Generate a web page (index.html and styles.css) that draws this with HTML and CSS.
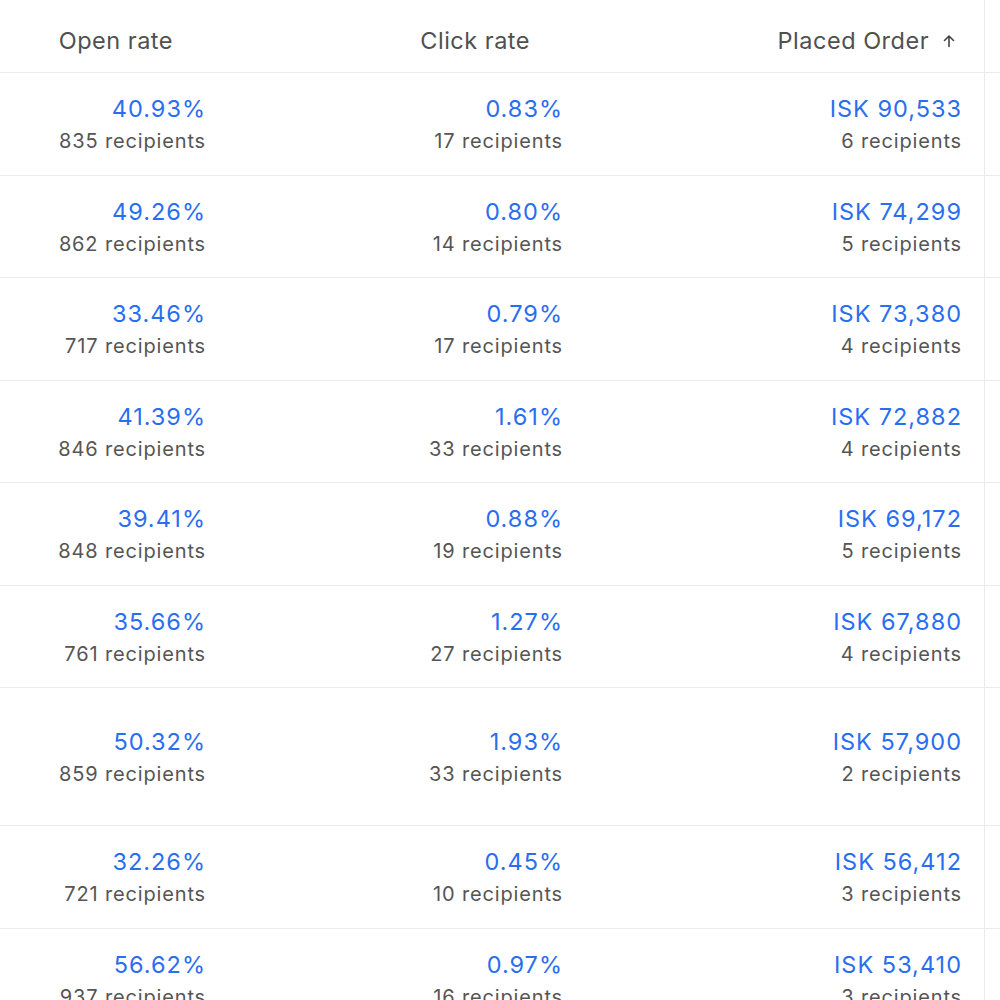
FILE: index.html
```html
<!DOCTYPE html>
<html lang="en">
<head>
<meta charset="utf-8">
<title>Campaign performance</title>
<link rel="stylesheet" href="styles.css">
</head>
<body>
<div class="table">
  <div class="row head">
    <div class="cell"><span class="htext">Open rate</span><span class="sort"></span></div>
    <div class="cell"><span class="htext">Click rate</span><span class="sort"></span></div>
    <div class="cell"><span class="htext">Placed Order</span><span class="sort active">
      <svg viewBox="0 0 16 16" width="16" height="16"><path d="M8 13.5V3M3.5 7.5L8 3l4.5 4.5" fill="none" stroke="currentColor" stroke-width="1.6" stroke-linecap="round" stroke-linejoin="round"/></svg>
    </span></div>
    <div class="cell spacer"></div>
  </div>

  <div class="row">
    <div class="cell"><span class="val">40.93%</span><span class="sub">835 recipients</span></div>
    <div class="cell"><span class="val">0.83%</span><span class="sub">17 recipients</span></div>
    <div class="cell"><span class="val">ISK 90,533</span><span class="sub">6 recipients</span></div>
    <div class="cell spacer"></div>
  </div>
  <div class="row">
    <div class="cell"><span class="val">49.26%</span><span class="sub">862 recipients</span></div>
    <div class="cell"><span class="val">0.80%</span><span class="sub">14 recipients</span></div>
    <div class="cell"><span class="val">ISK 74,299</span><span class="sub">5 recipients</span></div>
    <div class="cell spacer"></div>
  </div>
  <div class="row">
    <div class="cell"><span class="val">33.46%</span><span class="sub">717 recipients</span></div>
    <div class="cell"><span class="val">0.79%</span><span class="sub">17 recipients</span></div>
    <div class="cell"><span class="val">ISK 73,380</span><span class="sub">4 recipients</span></div>
    <div class="cell spacer"></div>
  </div>
  <div class="row">
    <div class="cell"><span class="val">41.39%</span><span class="sub">846 recipients</span></div>
    <div class="cell"><span class="val">1.61%</span><span class="sub">33 recipients</span></div>
    <div class="cell"><span class="val">ISK 72,882</span><span class="sub">4 recipients</span></div>
    <div class="cell spacer"></div>
  </div>
  <div class="row">
    <div class="cell"><span class="val">39.41%</span><span class="sub">848 recipients</span></div>
    <div class="cell"><span class="val">0.88%</span><span class="sub">19 recipients</span></div>
    <div class="cell"><span class="val">ISK 69,172</span><span class="sub">5 recipients</span></div>
    <div class="cell spacer"></div>
  </div>
  <div class="row">
    <div class="cell"><span class="val">35.66%</span><span class="sub">761 recipients</span></div>
    <div class="cell"><span class="val">1.27%</span><span class="sub">27 recipients</span></div>
    <div class="cell"><span class="val">ISK 67,880</span><span class="sub">4 recipients</span></div>
    <div class="cell spacer"></div>
  </div>
  <div class="row tall">
    <div class="cell"><span class="val">50.32%</span><span class="sub">859 recipients</span></div>
    <div class="cell"><span class="val">1.93%</span><span class="sub">33 recipients</span></div>
    <div class="cell"><span class="val">ISK 57,900</span><span class="sub">2 recipients</span></div>
    <div class="cell spacer"></div>
  </div>
  <div class="row">
    <div class="cell"><span class="val">32.26%</span><span class="sub">721 recipients</span></div>
    <div class="cell"><span class="val">0.45%</span><span class="sub">10 recipients</span></div>
    <div class="cell"><span class="val">ISK 56,412</span><span class="sub">3 recipients</span></div>
    <div class="cell spacer"></div>
  </div>
  <div class="row">
    <div class="cell"><span class="val">56.62%</span><span class="sub">937 recipients</span></div>
    <div class="cell"><span class="val">0.97%</span><span class="sub">16 recipients</span></div>
    <div class="cell"><span class="val">ISK 53,410</span><span class="sub">3 recipients</span></div>
    <div class="cell spacer"></div>
  </div>
</div>
</body>
</html>
```

FILE: styles.css
```css
html, body {
  margin: 0;
  padding: 0;
  background: #ffffff;
}

body {
  font-family: Inter, "Noto Sans", "Liberation Sans", sans-serif;
  color: #555555;
  overflow: hidden;
}

.table {
  width: 1000px;
}

.row {
  display: grid;
  grid-template-columns: 230px 357px 398px 15px;
  border-bottom: 1px solid #ebebeb;
  height: 102.5px;
  box-sizing: border-box;
}

.row.head {
  height: 73px;
}

.row.tall {
  height: 138px;
}

.cell {
  display: flex;
  flex-direction: column;
  align-items: flex-end;
  justify-content: center;
  padding-right: 24px;
  padding-top: 3px;
}

.cell:nth-child(3) {
  padding-right: 22px;
  border-right: 1px solid #ebebeb;
}

.cell.spacer {
  padding: 0;
}

.head .cell {
  flex-direction: row;
  align-items: center;
  justify-content: flex-end;
  padding-right: 29px;
  padding-top: 10px;
}

.head .cell:nth-child(3) {
  padding-right: 27px;
}

.htext {
  font-size: 23.5px;
  line-height: 30px;
  letter-spacing: 0.5px;
  color: #505050;
}

.sort {
  width: 16px;
  height: 16px;
  margin-left: 12px;
  color: #444444;
  display: flex;
}

.val {
  font-size: 23.5px;
  line-height: 33px;
  letter-spacing: 1px;
  color: #2a6ef0;
}

.sub {
  font-size: 20px;
  line-height: 33px;
  letter-spacing: 0.85px;
  color: #555555;
}
```
